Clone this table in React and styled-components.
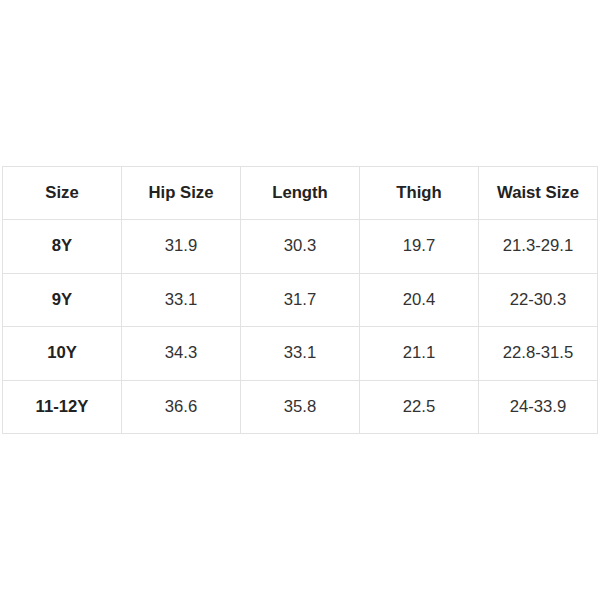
import React from "react";
import styled, { createGlobalStyle } from "styled-components";

const GlobalStyle = createGlobalStyle`
  html, body {
    margin: 0;
    padding: 0;
    background: #ffffff;
    font-family: "Liberation Sans", Arial, sans-serif;
  }
`;

const headers = ["Size", "Hip Size", "Length", "Thigh", "Waist Size"];
const rows = [
  ["8Y", "31.9", "30.3", "19.7", "21.3-29.1"],
  ["9Y", "33.1", "31.7", "20.4", "22-30.3"],
  ["10Y", "34.3", "33.1", "21.1", "22.8-31.5"],
  ["11-12Y", "36.6", "35.8", "22.5", "24-33.9"],
];

export default function App() {
  return (
    <>
      <GlobalStyle />
      <Page>
        <Table>
          <thead>
            <tr>
              {headers.map((h) => (
                <Th key={h}>{h}</Th>
              ))}
            </tr>
          </thead>
          <tbody>
            {rows.map((row) => (
              <tr key={row[0]}>
                {row.map((cell, i) => (
                  <Td key={i} $bold={i === 0}>
                    {cell}
                  </Td>
                ))}
              </tr>
            ))}
          </tbody>
        </Table>
      </Page>
    </>
  );
}

const Page = styled.div`
  width: 600px;
  height: 600px;
  display: flex;
  align-items: flex-start;
  justify-content: center;
  padding-top: 166px;
  box-sizing: border-box;
`;

const Table = styled.table`
  width: 596px;
  border-collapse: collapse;
  table-layout: fixed;
  border: 1px solid #e2e2e2;
`;

const Th = styled.th`
  height: 52px;
  border: 1px solid #e2e2e2;
  font-size: 16.7px;
  font-weight: bold;
  color: #222222;
  text-align: center;
  padding: 0;
`;

const Td = styled.td`
  height: 52.5px;
  border: 1px solid #e2e2e2;
  font-size: 16.7px;
  font-weight: ${(p) => (p.$bold ? "bold" : "normal")};
  color: ${(p) => (p.$bold ? "#222222" : "#333333")};
  text-align: center;
  padding: 0;
`;
